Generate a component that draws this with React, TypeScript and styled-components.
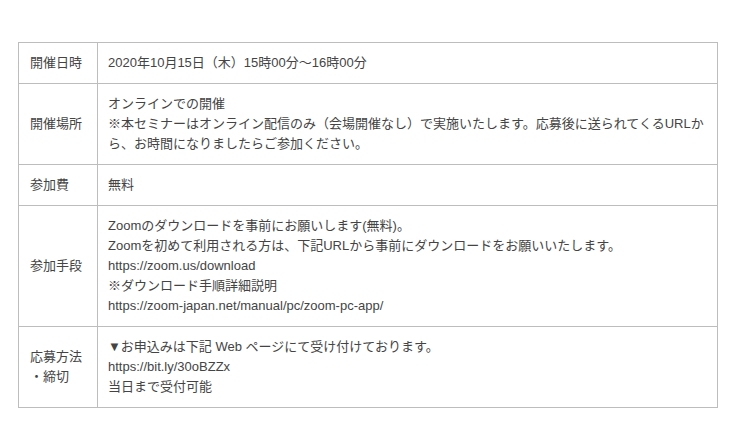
import React from 'react';
import styled, { createGlobalStyle } from 'styled-components';

interface Row {
  label: string[];
  lines: string[];
}

const rows: Row[] = [
  {
    label: ['開催日時'],
    lines: ['2020年10月15日（木）15時00分〜16時00分'],
  },
  {
    label: ['開催場所'],
    lines: [
      'オンラインでの開催',
      '※本セミナーはオンライン配信のみ（会場開催なし）で実施いたします。応募後に送られてくるURLから、お時間になりましたらご参加ください。',
    ],
  },
  {
    label: ['参加費'],
    lines: ['無料'],
  },
  {
    label: ['参加手段'],
    lines: [
      'Zoomのダウンロードを事前にお願いします(無料)。',
      'Zoomを初めて利用される方は、下記URLから事前にダウンロードをお願いいたします。',
      'https://zoom.us/download',
      '※ダウンロード手順詳細説明',
      'https://zoom-japan.net/manual/pc/zoom-pc-app/',
    ],
  },
  {
    label: ['応募方法', '・締切'],
    lines: [
      '▼お申込みは下記 Web ページにて受け付けております。',
      'https://bit.ly/30oBZZx',
      '当日まで受付可能',
    ],
  },
];

const GlobalStyle = createGlobalStyle`
  html, body {
    margin: 0;
    background: #fff;
  }

  body {
    font-family: "Liberation Sans", "Noto Sans CJK JP", sans-serif;
    color: #444;
  }
`;

const Page = styled.div`
  padding: 42px 22px 0 18px;
`;

const Table = styled.div`
  width: 700px;
  display: grid;
  grid-template-columns: 78px 1fr;
  border: 1px solid #bdbdbd;
  box-sizing: border-box;
  font-size: 13px;
  line-height: 20px;
`;

const Cell = styled.div<{ $head?: boolean; $last?: boolean }>`
  padding: 10px ${(p) => (p.$head ? '8px' : '12px')} 10px ${(p) => (p.$head ? '11px' : '10px')};
  border-bottom: ${(p) => (p.$last ? 'none' : '1px solid #bdbdbd')};
  border-left: ${(p) => (p.$head ? 'none' : '1px solid #bdbdbd')};
  display: flex;
  flex-direction: column;
  justify-content: ${(p) => (p.$head ? 'center' : 'flex-start')};
  line-break: strict;
`;

const App: React.FC = () => {
  return (
    <Page>
      <GlobalStyle />
      <Table>
        {rows.map((row, i) => {
          const last = i === rows.length - 1;
          return (
            <React.Fragment key={i}>
              <Cell $head $last={last}>
                {row.label.map((l) => (
                  <div key={l}>{l}</div>
                ))}
              </Cell>
              <Cell $last={last}>
                {row.lines.map((l) => (
                  <div key={l}>{l}</div>
                ))}
              </Cell>
            </React.Fragment>
          );
        })}
      </Table>
    </Page>
  );
};

export default App;
